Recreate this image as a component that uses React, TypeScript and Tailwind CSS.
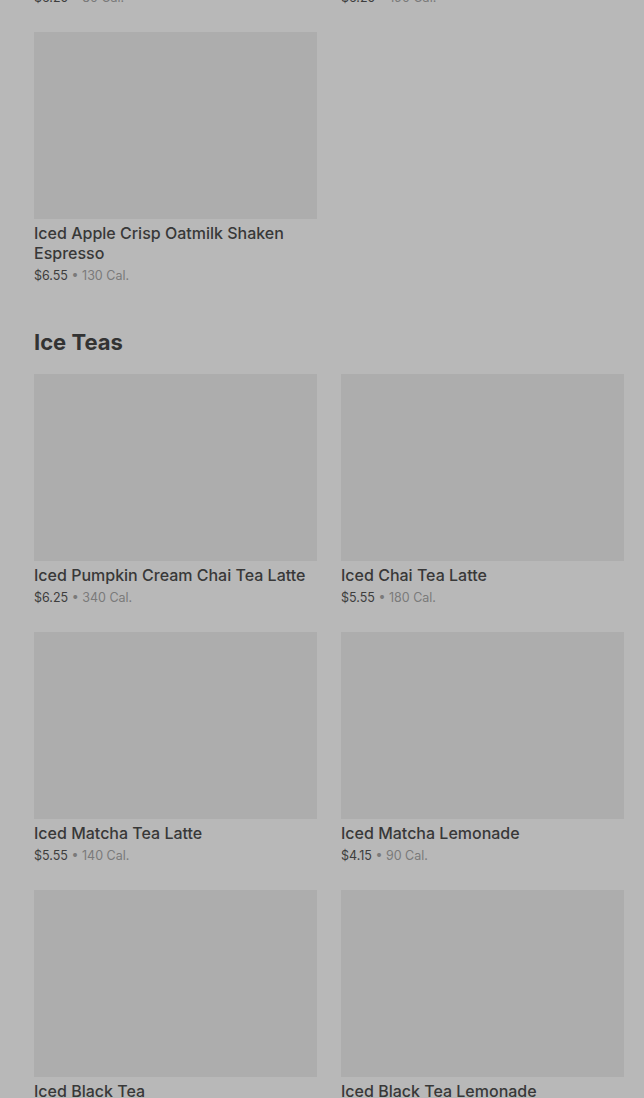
import React from 'react';

type Item = { name: string; price: string; cal: string };

const prevRow: Item[] = [
  { name: 'Iced Brown Sugar Oatmilk Shaken Espresso', price: '$6.25', cal: '80 Cal.' },
  { name: 'Iced Toasted Vanilla Oatmilk Shaken Espresso', price: '$6.25', cal: '190 Cal.' },
  { name: 'Iced Apple Crisp Oatmilk Shaken Espresso', price: '$6.55', cal: '130 Cal.' },
];

const iceTeas: Item[] = [
  { name: 'Iced Pumpkin Cream Chai Tea Latte', price: '$6.25', cal: '340 Cal.' },
  { name: 'Iced Chai Tea Latte', price: '$5.55', cal: '180 Cal.' },
  { name: 'Iced Matcha Tea Latte', price: '$5.55', cal: '140 Cal.' },
  { name: 'Iced Matcha Lemonade', price: '$4.15', cal: '90 Cal.' },
  { name: 'Iced Black Tea', price: '$3.95', cal: '0 Cal.' },
  { name: 'Iced Black Tea Lemonade', price: '$4.15', cal: '100 Cal.' },
];

const Card = ({ item }: { item: Item }) => (
  <div className="flex flex-col">
    <div className="h-[187px] w-full bg-[#adadad]" />
    <div className="mt-1 text-[16px] leading-[20px] font-medium text-[#383838]">{item.name}</div>
    <div className="mt-[3px] text-[12.5px] leading-[20px] text-[#7a7a7a]">
      <span className="text-[#3d3d3d]">{item.price}</span> • {item.cal}
    </div>
  </div>
);

const App: React.FC = () => {
  return (
    <div
      className="min-h-screen bg-[#b8b8b8] overflow-hidden pl-[34px] pr-[20px]"
      style={{ fontFamily: 'Inter, "Noto Sans", sans-serif' }}
    >
      {/* scrolled list: previous section's last rows */}
      <div className="-mt-[246px] grid grid-cols-2 gap-x-6 gap-y-6">
        {prevRow.map((it) => (
          <Card key={it.name} item={it} />
        ))}
      </div>

      <section className="pt-[40px]">
        <h2 className="text-[22px] leading-[32px] font-bold text-[#333] mb-4">Ice Teas</h2>
        <div className="grid grid-cols-2 gap-x-6 gap-y-6">
          {iceTeas.map((it) => (
            <Card key={it.name} item={it} />
          ))}
        </div>
      </section>
    </div>
  );
};

export default App;
